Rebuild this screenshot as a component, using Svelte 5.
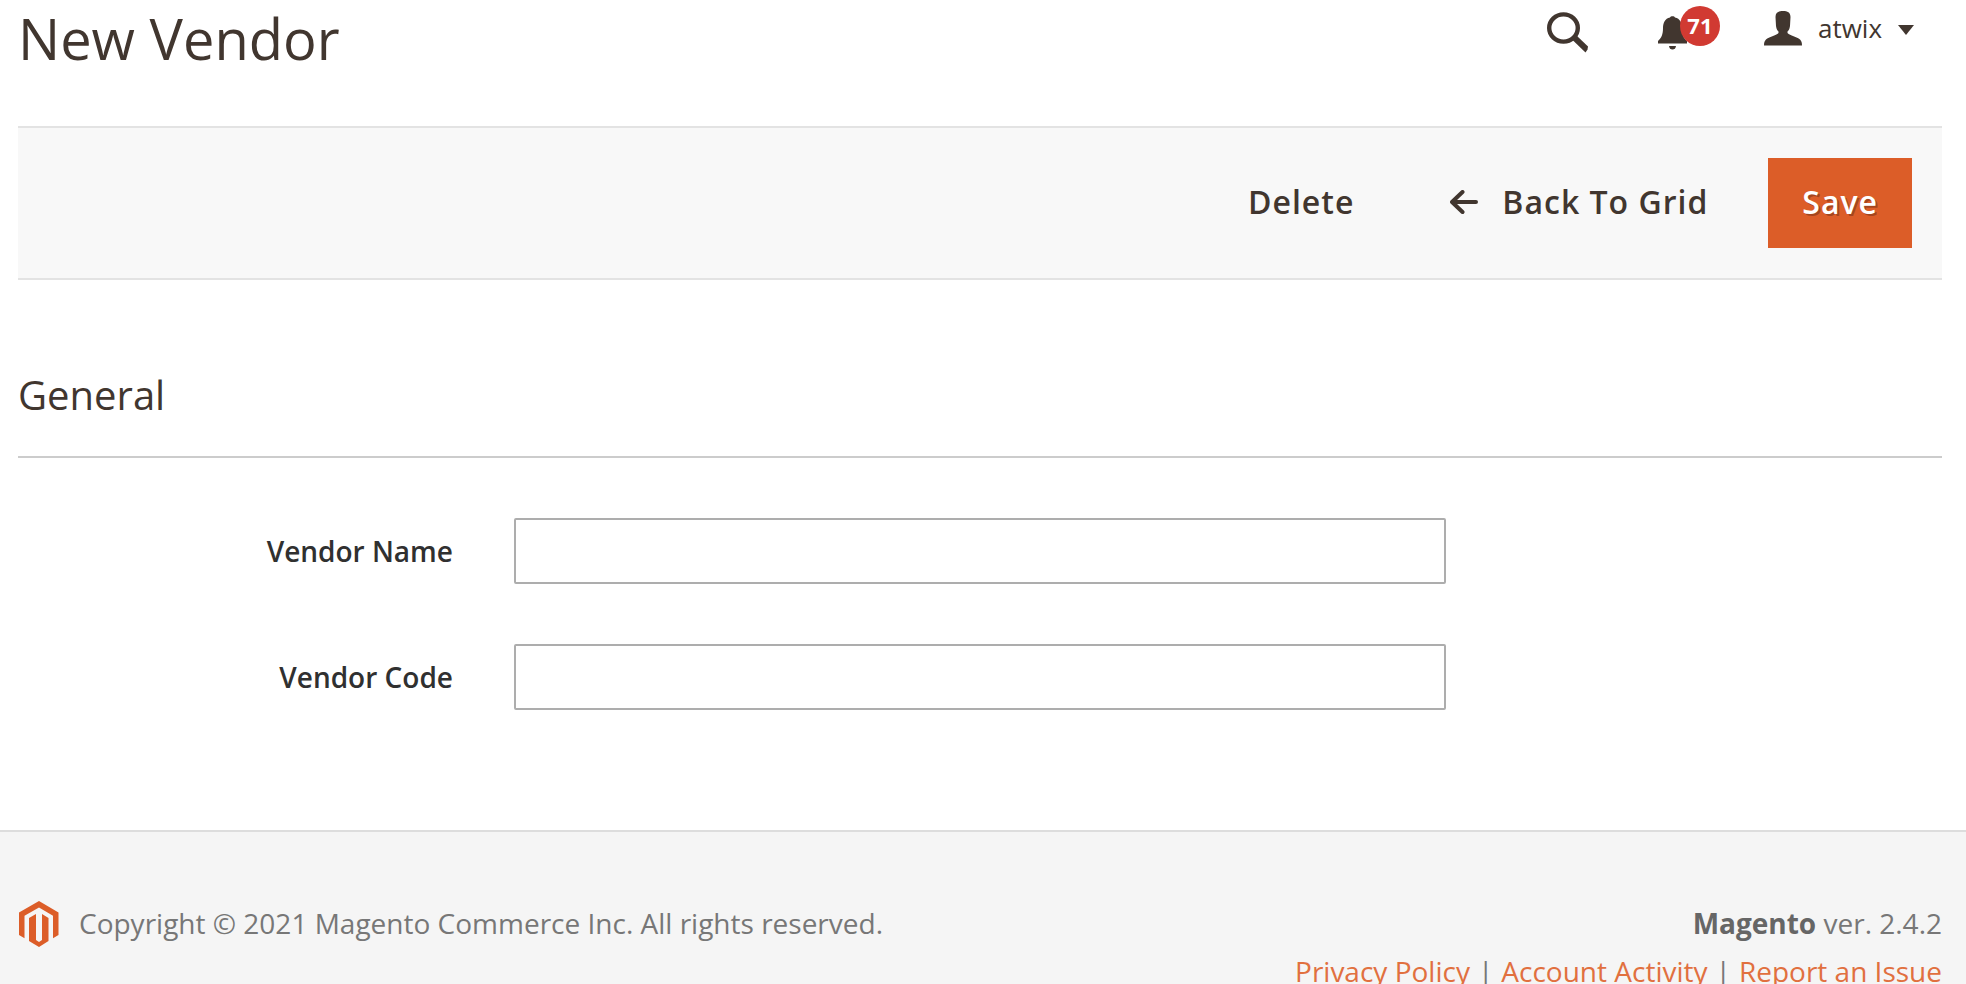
<script lang="ts">
  const fields = [
    { id: 'vendor-name', label: 'Vendor Name' },
    { id: 'vendor-code', label: 'Vendor Code' },
  ];
  const links = ['Privacy Policy', 'Account Activity', 'Report an Issue'];
</script>

<div class="page">
  <header class="header">
    <h1>New Vendor</h1>
    <div class="tools">
      <button class="tool search" aria-label="Search">
        <svg width="42" height="42" viewBox="0 0 42 42">
          <ellipse cx="16.5" cy="16" rx="14.3" ry="13.6" fill="none" stroke="#41362f" stroke-width="4.4" />
          <path d="M24.500 27 29 23 41 34.500 40.500 37.500 38.500 40.500Z" fill="#41362f" />
        </svg>
      </button>
      <button class="tool bell" aria-label="Notifications">
        <svg width="30" height="34" viewBox="0 0 30 34">
          <path fill="#41362f" d="M12 1.500C12.500-.2 16.500-.2 17 1.500C22 2.500 24 7 24 12C24 18 25.500 22 29 25V27.500H0V25C3.500 22 5 18 5 12C5 7 7 2.500 12 1.500ZM11 30H18Q17.500 33.500 14.500 33.500T11 30Z" />
        </svg>
        <span class="badge">71</span>
      </button>
      <button class="tool account">
        <svg width="38" height="35" viewBox="0 0 38 35">
          <path fill="#41362f" d="M11.500 6C11.500 1.500 14.500 0 19 0S26.500 1.500 26.500 6L26 15C25.500 18.500 24.500 19.500 23.500 20.500V22C26 24.500 33 26 36 28.500C37.500 30 38 31.500 38 34.500H0C0 31.500 .5 30 2 28.500C5 26 12 24.500 14.500 22V20.500C13.500 19.500 12.500 18.500 12 15Z" />
        </svg>
        <span>atwix</span>
        <svg class="caret" width="16" height="10" viewBox="0 0 16 10"><path fill="#41362f" d="M0 0H16L8 10Z" /></svg>
      </button>
    </div>
  </header>

  <main>
    <div class="actions">
      <button class="action">Delete</button>
      <button class="action back">
        <svg width="28" height="24" viewBox="0 0 28 24"><path d="M12.500 2 2 12 12.500 22M2 12H26" fill="none" stroke="#41362f" stroke-width="4" stroke-linecap="round" stroke-linejoin="round" /></svg>
        <span>Back To Grid</span>
      </button>
      <button class="action primary">Save</button>
    </div>

    <section>
      <h2>General</h2>
      {#each fields as field}
        <div class="field">
          <label for={field.id}>{field.label}</label>
          <input id={field.id} type="text" />
        </div>
      {/each}
    </section>
  </main>

  <footer>
    <div class="copyright">
      <svg width="40" height="46" viewBox="0 0 40 46">
        <path fill="#dc5d28" d="M20 0 39.500 11.500V34L34 37.200V14.700L20 6.500 5.500 14.700V37.200L0 34V11.500ZM10 17 17 13V39L20 41 23 39V13L29.500 17V40L20 46 10 40Z" />
      </svg>
      <span>Copyright © 2021 Magento Commerce Inc. All rights reserved.</span>
    </div>
    <div class="legal">
      <p><strong>Magento</strong> ver. 2.4.2</p>
      <nav>
        {#each links as link}
          <a href="#top">{link}</a>
        {/each}
      </nav>
    </div>
  </footer>
</div>

<style>
  :global(html) {
    background: #fff;
  }
  :global(body) {
    margin: 0;
    overflow: hidden;
  }
  .page {
    height: 100vh;
    overflow: hidden;
    color: #41362f;
    font-family: 'Open Sans', 'Noto Sans', sans-serif;
    font-size: 28px;
    line-height: 48px;
  }
  button {
    margin: 0;
    padding: 0;
    border: 0;
    background: none;
    color: inherit;
    font: inherit;
    cursor: pointer;
  }
  svg {
    display: block;
    flex: none;
  }
  .header {
    display: flex;
    justify-content: space-between;
    align-items: flex-start;
    height: 126px;
    padding: 0 52px 0 18px;
  }
  h1 {
    margin: 0;
    font-size: 56px;
    font-weight: 400;
    line-height: 76px;
  }
  .tools {
    display: flex;
    align-items: flex-start;
    padding-top: 6px;
  }
  .tool {
    display: flex;
    align-items: flex-start;
  }
  .search {
    margin-right: 69px;
    padding-top: 6px;
  }
  .bell {
    position: relative;
    margin-right: 76px;
    padding-top: 10px;
  }
  .badge {
    position: absolute;
    top: 0;
    left: 22px;
    width: 40px;
    height: 40px;
    border-radius: 50%;
    background: #d13a32;
    color: #fff;
    font-size: 22px;
    font-weight: 700;
    line-height: 38px;
    text-align: center;
  }
  .account {
    gap: 16px;
    padding-top: 5px;
    font-size: 26px;
    line-height: 34px;
  }
  .caret {
    margin-top: 14px;
  }
  main {
    padding: 0 24px 0 18px;
  }
  .actions {
    display: flex;
    justify-content: flex-end;
    align-items: center;
    padding: 30px;
    border-top: 2px solid #e3e3e3;
    border-bottom: 2px solid #e3e3e3;
    background: #f8f8f8;
  }
  .action {
    display: flex;
    align-items: center;
    box-sizing: border-box;
    height: 90px;
    padding-bottom: 2px;
    font-size: 32px;
    font-weight: 600;
    letter-spacing: 1px;
  }
  .back {
    gap: 24px;
    margin: 0 60px 0 96px;
  }
  .primary {
    padding: 0 34px 2px;
    background: #dc5d28;
    color: #fff;
    text-shadow: 2px 2px 0 rgba(0, 0, 0, 0.25);
  }
  section {
    padding: 80px 0 120px;
  }
  h2 {
    margin: 0 0 60px;
    padding: 7px 0 33px;
    border-bottom: 2px solid #ccc;
    font-size: 40px;
    font-weight: 400;
    line-height: 56px;
  }
  .field {
    display: grid;
    grid-template-columns: 7fr 15fr 7fr;
    column-gap: 61px;
    align-items: center;
  }
  .field + .field {
    margin-top: 60px;
  }
  label {
    color: #303030;
    font-weight: 600;
    text-align: right;
  }
  input {
    box-sizing: border-box;
    width: 100%;
    height: 66px;
    padding: 0 20px;
    border: 2px solid #adadad;
    border-radius: 2px;
    background: #fff;
    color: #303030;
    font: inherit;
  }
  footer {
    display: flex;
    justify-content: space-between;
    align-items: flex-start;
    padding: 67px 24px 60px 19px;
    border-top: 2px solid #ddd;
    background: #f5f5f5;
    color: #777;
  }
  .copyright {
    display: flex;
    align-items: flex-end;
    gap: 20px;
  }
  .legal {
    text-align: right;
  }
  p {
    margin: 0;
  }
  strong {
    color: #666;
    font-weight: 700;
  }
  nav {
    display: flex;
    justify-content: flex-end;
  }
  a {
    color: #e1703f;
    text-decoration: none;
  }
  a + a::before {
    content: '|';
    margin: 0 8px;
    color: #777;
  }
</style>
